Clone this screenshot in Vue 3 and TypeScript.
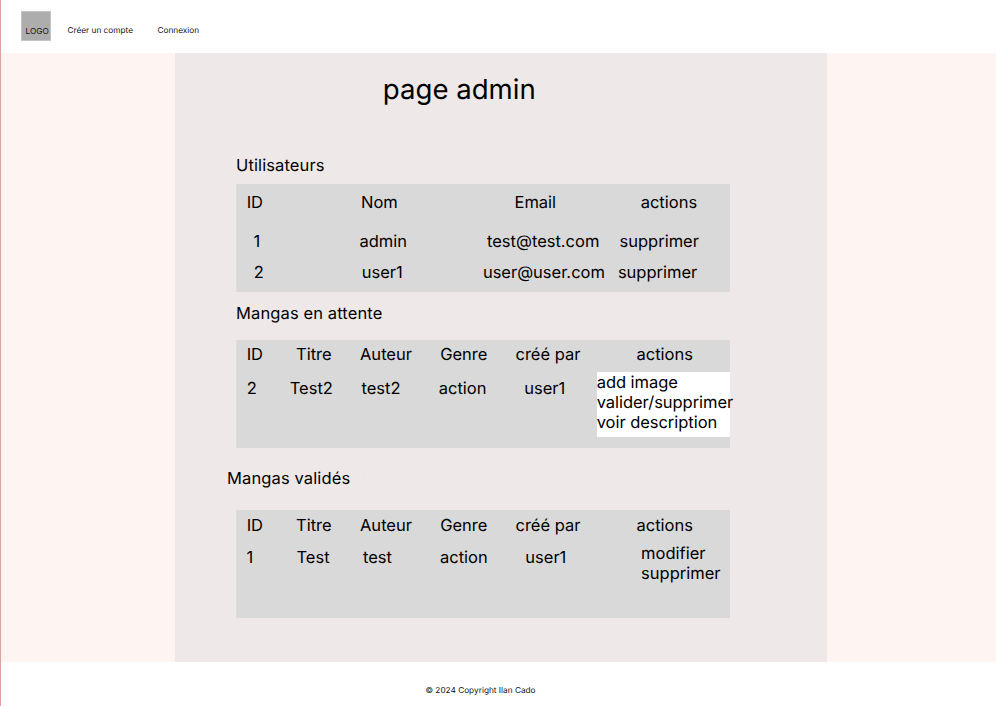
<script setup lang="ts">
interface Row {
  kind: string
  cells: string[]
}
interface Section {
  id: string
  title: string
  rows: Row[]
}

const navLinks: string[] = ['Créer un compte', 'Connexion']

const mangaHead: string[] = ['ID', 'Titre', 'Auteur', 'Genre', 'créé par', 'actions']

const sections: Section[] = [
  {
    id: 'users',
    title: 'Utilisateurs',
    rows: [
      { kind: 'users-head', cells: ['ID', 'Nom', 'Email', 'actions'] },
      { kind: 'users-first', cells: ['1', 'admin', 'test@test.com', 'supprimer'] },
      { kind: 'users-second', cells: ['2', 'user1', 'user@user.com', 'supprimer'] },
    ],
  },
  {
    id: 'pending',
    title: 'Mangas en attente',
    rows: [
      { kind: 'manga-head', cells: mangaHead },
      {
        kind: 'pending-row',
        cells: ['2', 'Test2', 'test2', 'action', 'user1', 'add image\nvalider/supprimer\nvoir description'],
      },
    ],
  },
  {
    id: 'approved',
    title: 'Mangas validés',
    rows: [
      { kind: 'manga-head', cells: mangaHead },
      { kind: 'approved-row', cells: ['1', 'Test', 'test', 'action', 'user1', 'modifier\nsupprimer'] },
    ],
  },
]
</script>

<template>
  <div class="page">
    <header class="topbar">
      <div class="logo">LOGO</div>
      <nav class="nav">
        <a v-for="link in navLinks" :key="link">{{ link }}</a>
      </nav>
    </header>
    <main class="main">
      <div class="panel">
        <h1 class="title">page admin</h1>
        <section v-for="section in sections" :key="section.id" :class="section.id">
          <h2 class="heading">{{ section.title }}</h2>
          <div class="table">
            <div v-for="row in section.rows" :key="row.kind" class="row" :class="row.kind">
              <span v-for="(cell, i) in row.cells" :key="i" class="cell">{{ cell }}</span>
            </div>
          </div>
        </section>
      </div>
    </main>
    <footer class="footer">© 2024 Copyright Ilan Cado</footer>
  </div>
</template>

<style>
body {
  margin: 0;
  background: #fff;
}
</style>

<style scoped>
.page {
  box-sizing: border-box;
  width: 996px;
  height: 706px;
  border-left: 1px solid #dca3a3;
  display: flex;
  flex-direction: column;
  overflow: hidden;
  font-family: Inter, 'Liberation Sans', sans-serif;
  font-size: 16.5px;
  line-height: 20px;
  text-rendering: geometricPrecision;
  color: #000;
}
.topbar {
  box-sizing: border-box;
  flex: none;
  height: 53px;
  padding: 11px 0 0 20px;
  display: flex;
  font-size: 8.25px;
  line-height: 10px;
  color: #111;
}
.logo {
  box-sizing: border-box;
  width: 30px;
  height: 30px;
  border: 1px solid #c4c4c4;
  background: #adadad;
  padding: 14px 0 0 3.5px;
}
.nav {
  display: flex;
  gap: 24.5px;
  padding: 14px 0 0 16.5px;
}
.main {
  flex: none;
  height: 609px;
  background: #fef4f2;
}
.panel {
  box-sizing: border-box;
  width: 652px;
  height: 609px;
  margin-left: 174px;
  padding-top: 20px;
  background: #eee8e8;
}
.title {
  margin: 0 0 0 207.8px;
  font-size: 27.6px;
  line-height: 33px;
  font-weight: 400;
}
.heading {
  margin: 0;
  padding-left: 61px;
  font-size: inherit;
  font-weight: 400;
  letter-spacing: 0.12px;
  display: flex;
}
.table {
  box-sizing: border-box;
  width: 494px;
  height: 108px;
  margin-left: 61px;
  border-left: 1px solid #e0dddd;
  background: #d9d9d9;
}
.row {
  display: grid;
  align-items: start;
}
.cell {
  white-space: pre;
}
.users {
  padding-top: 49px;
}
.users .table {
  margin-top: 9px;
  padding-top: 8px;
}
.users-head {
  grid-template-columns: 114.3px 153.5px 126.2px 90px;
  padding-left: 9.7px;
}
.users-first {
  grid-template-columns: 106px 127.5px 132.5px 90px;
  padding: 19px 0 0 16.5px;
}
.users-second {
  grid-template-columns: 107.9px 121.2px 135px 90px;
  padding: 11px 0 0 16.8px;
}
.pending {
  padding-top: 11px;
}
.pending .table {
  margin-top: 17px;
  padding-top: 4px;
}
.approved {
  padding-top: 20px;
}
.approved .heading {
  padding-left: 52px;
}
.approved .heading::after {
  content: '';
  width: 1px;
  height: 8px;
  margin: 2px 0 0 14px;
  background: #e8e4e4;
}
.approved .table {
  margin-top: 22px;
  padding-top: 5px;
}
.manga-head {
  grid-template-columns: 49.3px 64px 80.2px 75.3px 121px 90px;
  padding-left: 9.7px;
}
.pending-row {
  grid-template-columns: 43px 71.8px 77.3px 85.4px 72.5px 133px;
  padding: 8px 0 0 9.7px;
}
.pending-row .cell {
  padding-top: 6px;
}
.pending-row .cell:last-child {
  height: 65px;
  padding-top: 0;
  letter-spacing: -0.04px;
  background: #fff;
}
.approved-row {
  grid-template-columns: 50px 66.5px 77px 85.3px 115.8px 90px;
  padding: 8px 0 0 9.5px;
}
.approved-row .cell {
  padding-top: 4px;
}
.approved-row .cell:last-child {
  padding-top: 0;
}
.footer {
  padding: 23px 0 0 424.5px;
  font-size: 8.25px;
  line-height: 10px;
  color: #111;
}
</style>
